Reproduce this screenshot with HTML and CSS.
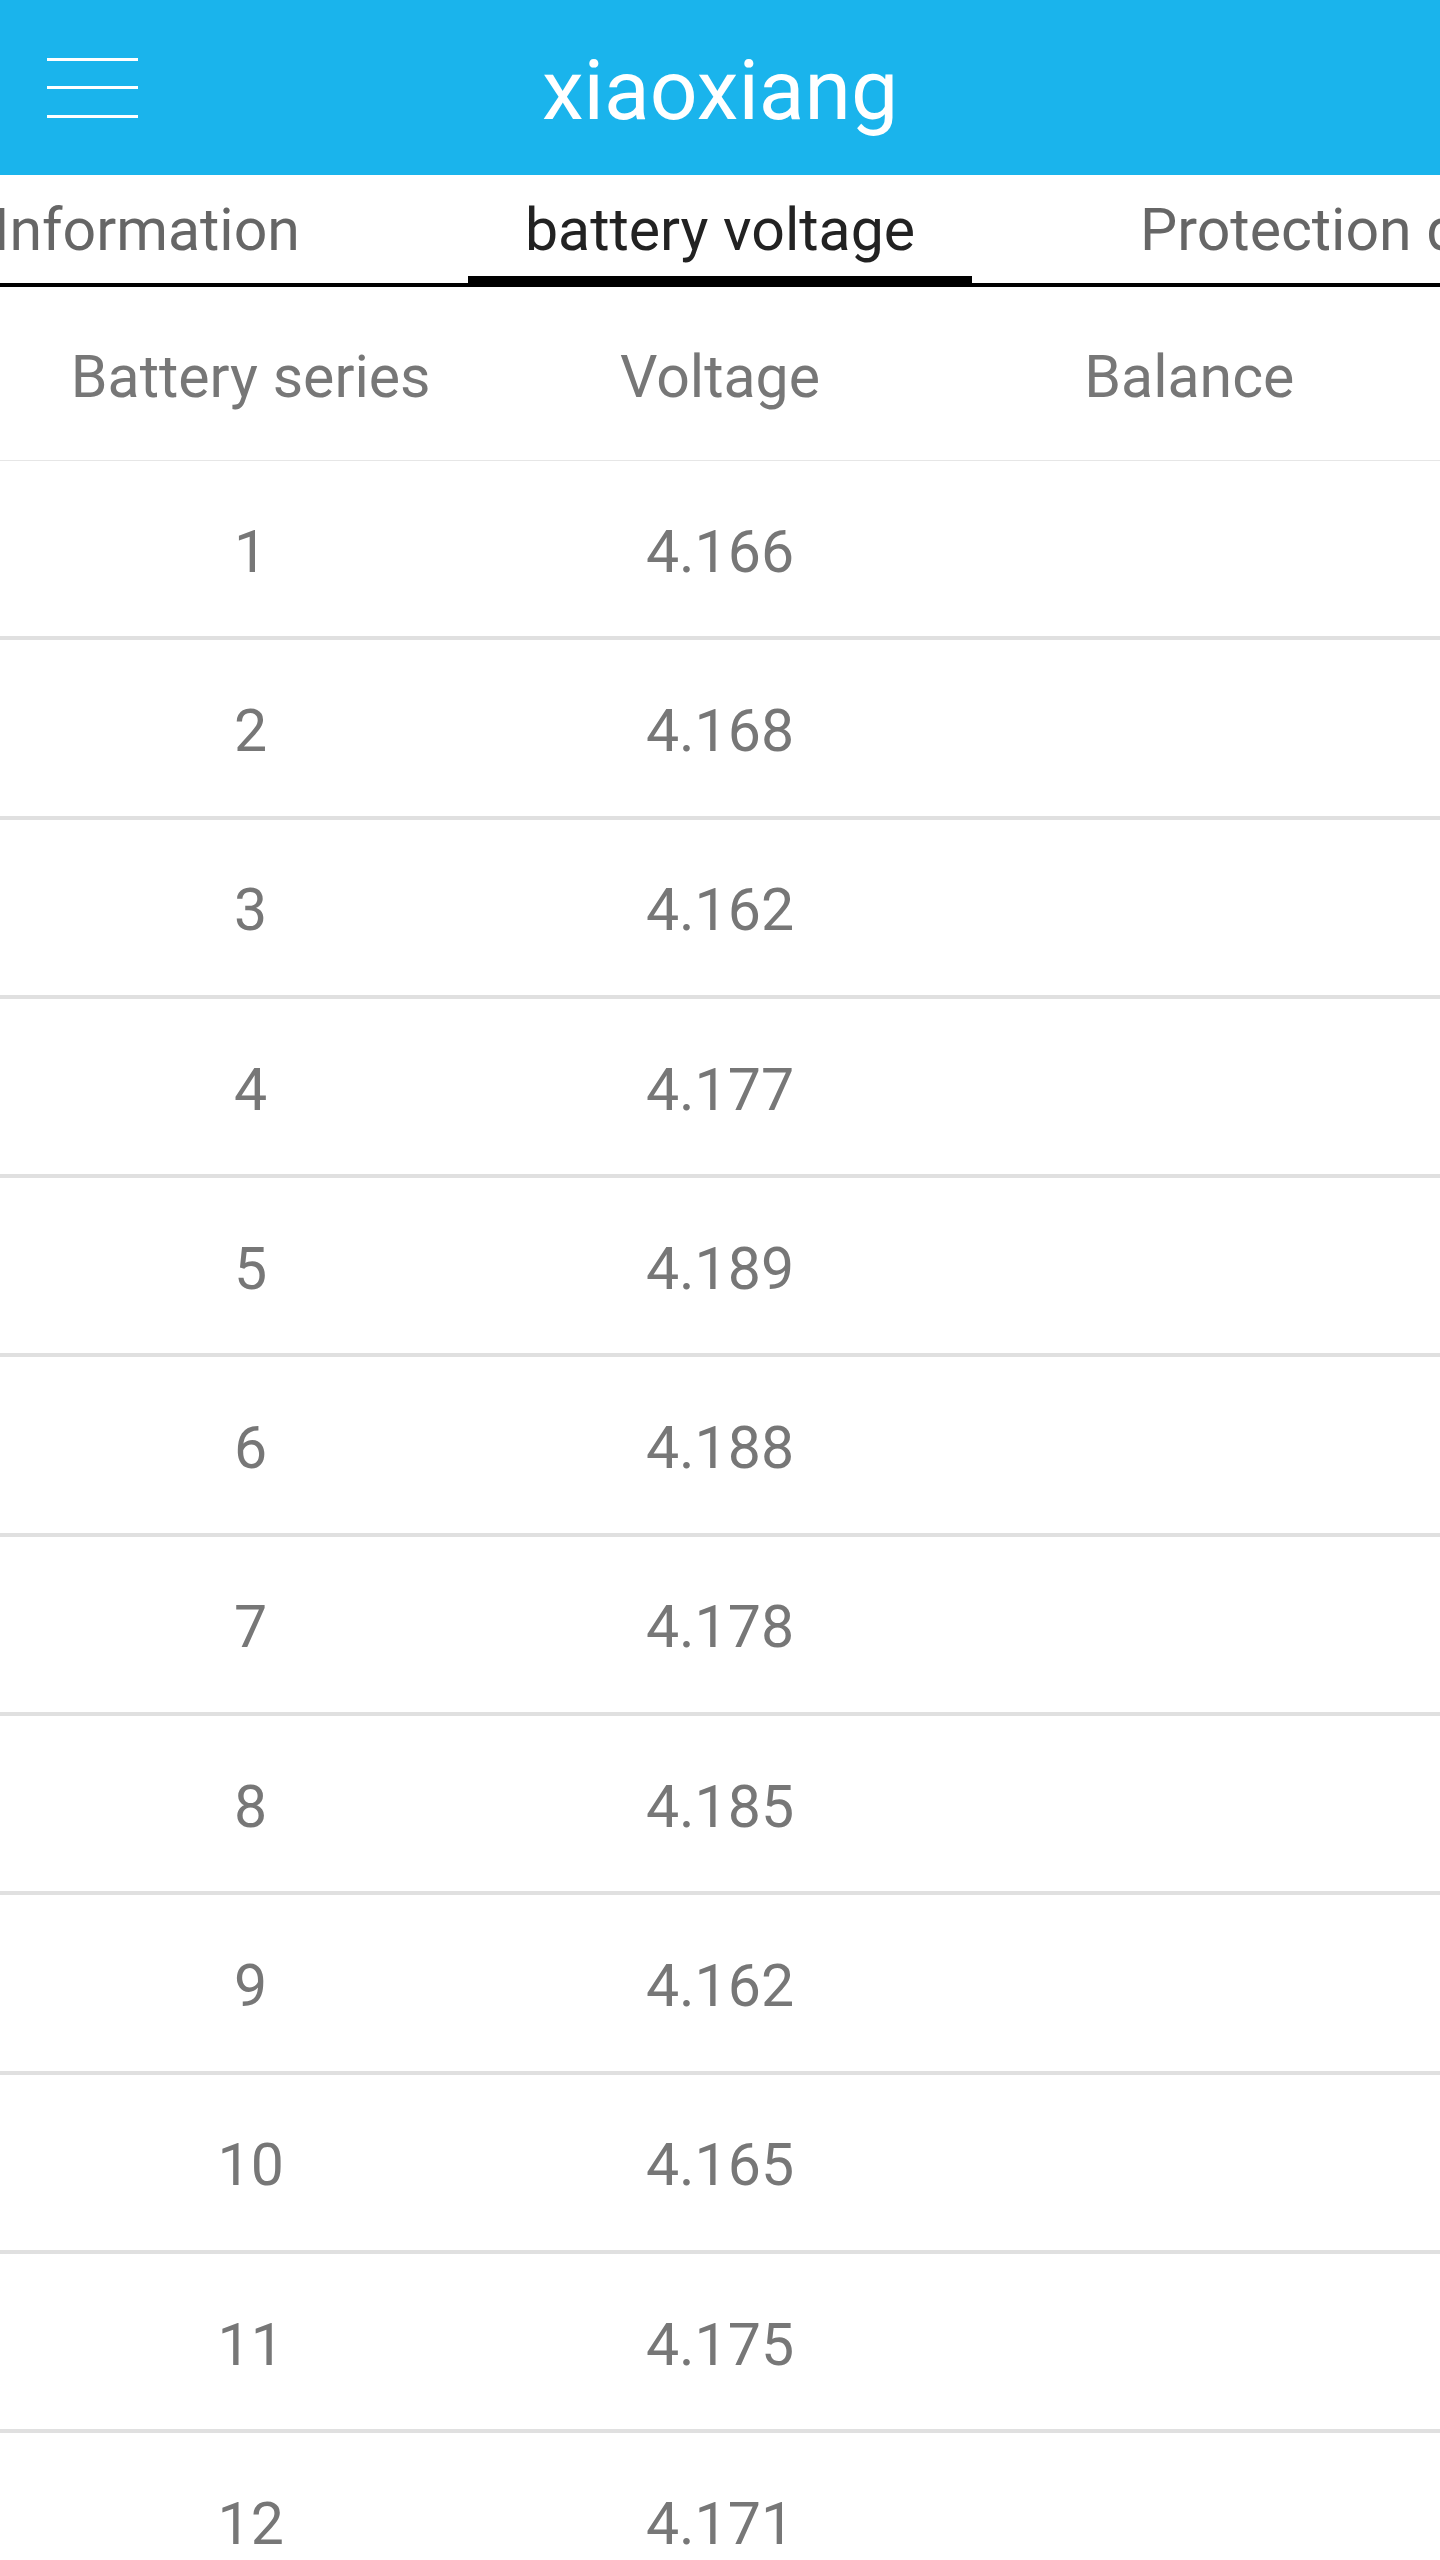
FILE: index.html
```html
<!DOCTYPE html>
<html lang="en">
<head>
    <meta charset="UTF-8">
    <meta name="viewport" content="width=device-width, initial-scale=1.0">
    <title>xiaoxiang</title>
    <link rel="stylesheet" href="styles.css">
</head>
<body>
    <div class="app">
        <header class="topbar">
            <button class="menu" aria-label="Menu">
                <span></span>
                <span></span>
                <span></span>
            </button>
            <h1 class="title">xiaoxiang</h1>
            <div></div>
        </header>
        <nav class="tabs">
            <div class="tab tab-left">Information</div>
            <div class="tab active">battery voltage</div>
            <div class="tab tab-right">Protection data</div>
        </nav>
        <div class="table">
            <div class="row head">
                <div>Battery series</div>
                <div>Voltage</div>
                <div>Balance</div>
            </div>
            <div class="row"><div>1</div><div>4.166</div><div></div></div>
            <div class="row"><div>2</div><div>4.168</div><div></div></div>
            <div class="row"><div>3</div><div>4.162</div><div></div></div>
            <div class="row"><div>4</div><div>4.177</div><div></div></div>
            <div class="row"><div>5</div><div>4.189</div><div></div></div>
            <div class="row"><div>6</div><div>4.188</div><div></div></div>
            <div class="row"><div>7</div><div>4.178</div><div></div></div>
            <div class="row"><div>8</div><div>4.185</div><div></div></div>
            <div class="row"><div>9</div><div>4.162</div><div></div></div>
            <div class="row"><div>10</div><div>4.165</div><div></div></div>
            <div class="row"><div>11</div><div>4.175</div><div></div></div>
            <div class="row"><div>12</div><div>4.171</div><div></div></div>
        </div>
    </div>
</body>
</html>
```

FILE: styles.css
```css
body {
    margin: 0;
    background-color: #fff;
    font-family: Roboto, "Noto Sans", Arial, sans-serif;
}
.app {
    width: 1440px;
    overflow: hidden;
}
.topbar {
    display: grid;
    grid-template-columns: 1fr auto 1fr;
    align-items: center;
    height: 175px;
    background-color: #1ab4ec;
}
.menu {
    display: flex;
    flex-direction: column;
    gap: 25.5px;
    width: 91px;
    margin-left: 47px;
    padding: 0;
    border: none;
    background: none;
}
.menu span {
    display: block;
    height: 3px;
    background-color: #fff;
}
.title {
    margin: 0;
    padding-top: 6px;
    color: #fff;
    font-size: 84px;
    font-weight: 400;
}
.tabs {
    display: grid;
    grid-template-columns: minmax(0, 1fr) auto minmax(0, 1fr);
    height: 108px;
    border-bottom: 4px solid #000;
    overflow: hidden;
    white-space: nowrap;
}
.tab {
    height: 108px;
    padding: 0 57px;
    line-height: 110px;
    font-size: 59px;
    color: #666;
}
.tab-left {
    justify-self: end;
    margin-right: 111px;
}
.tab-right {
    justify-self: start;
    margin-left: 111px;
}
.tab.active {
    color: #222;
    box-shadow: inset 0 -7px 0 #000;
}
.row {
    display: grid;
    grid-template-columns: repeat(3, 1fr);
    align-items: center;
    box-sizing: border-box;
    height: 179.3px;
    padding: 5px 16px 0;
    border-bottom: 4px solid #e0e0e0;
    font-size: 59px;
    color: #777;
    text-align: center;
}
.row.head {
    height: 174px;
    border-bottom: 1px solid #e6e6e6;
}
```
